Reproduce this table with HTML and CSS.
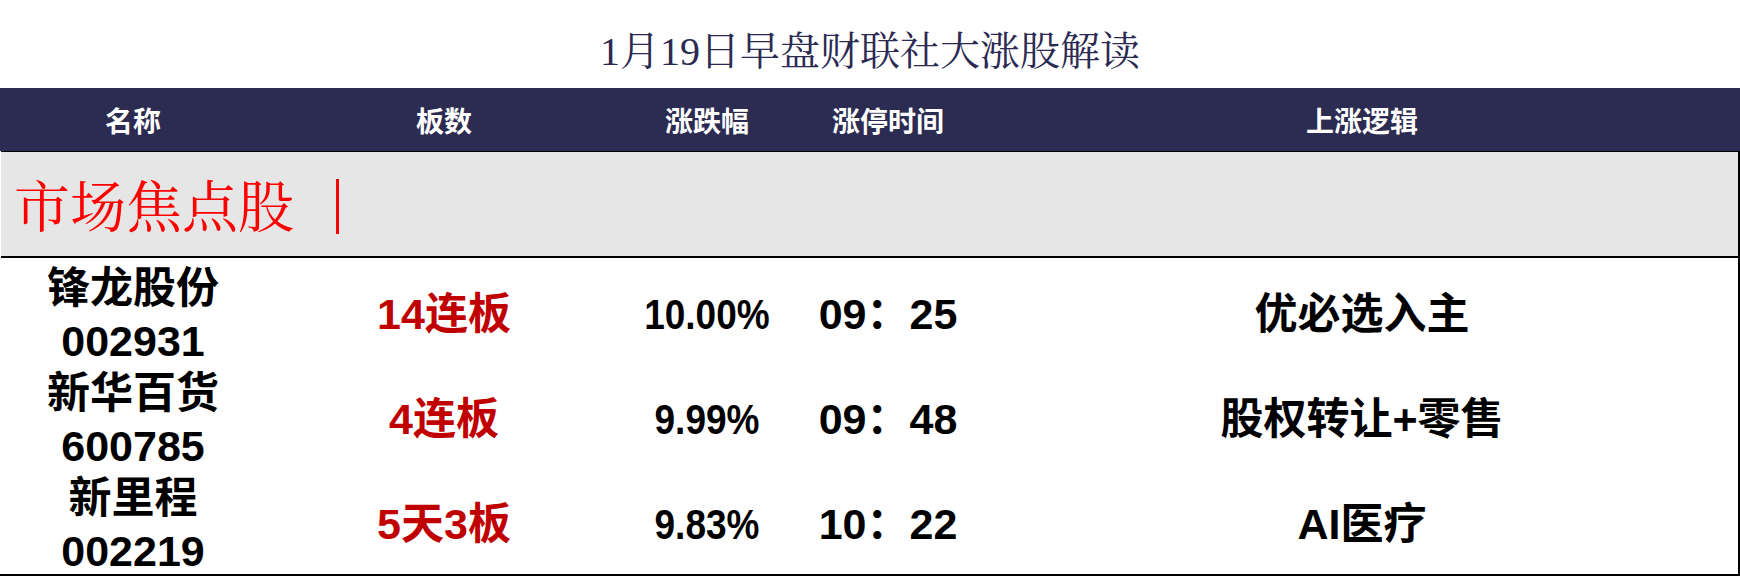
FILE: index.html
```html
<!DOCTYPE html>
<html lang="zh-CN">
<head>
<meta charset="utf-8">
<title>1月19日早盘财联社大涨股解读</title>
<link rel="stylesheet" href="styles.css">
</head>
<body>
<div class="page">
  <h1 class="title">1月19日早盘财联社大涨股解读</h1>
  <div class="head grid">
    <div class="cell">名称</div>
    <div class="cell">板数</div>
    <div class="cell">涨跌幅</div>
    <div class="cell">涨停时间</div>
    <div class="cell">上涨逻辑</div>
  </div>
  <div class="section">
    <span class="section-name">市场焦点股</span>
    <span class="section-bar"></span>
  </div>
  <div class="rows">
    <div class="row grid">
      <div class="cell name"><span>锋龙股份</span><span>002931</span></div>
      <div class="cell board">14连板</div>
      <div class="cell pct"><span class="narrow">10.00%</span></div>
      <div class="cell time">09：25</div>
      <div class="cell logic">优必选入主</div>
    </div>
    <div class="row grid">
      <div class="cell name"><span>新华百货</span><span>600785</span></div>
      <div class="cell board">4连板</div>
      <div class="cell pct"><span class="narrow">9.99%</span></div>
      <div class="cell time">09：48</div>
      <div class="cell logic">股权转让+零售</div>
    </div>
    <div class="row grid">
      <div class="cell name"><span>新里程</span><span>002219</span></div>
      <div class="cell board">5天3板</div>
      <div class="cell pct"><span class="narrow">9.83%</span></div>
      <div class="cell time">10：22</div>
      <div class="cell logic">AI医疗</div>
    </div>
  </div>
</div>
</body>
</html>
```

FILE: styles.css
```css
* {
  box-sizing: border-box;
}

html, body {
  margin: 0;
  padding: 0;
  background: #ffffff;
}

.page {
  width: 1740px;
  height: 576px;
  overflow: hidden;
  display: flex;
  flex-direction: column;
  font-family: "Liberation Sans", "Noto Sans CJK SC", sans-serif;
}

.title {
  flex: 0 0 88px;
  margin: 0;
  padding-top: 6px;
  display: flex;
  align-items: center;
  justify-content: center;
  font-family: "Liberation Serif", "Noto Serif CJK SC", "Noto Sans CJK SC", serif;
  font-weight: 400;
  font-size: 40px;
  color: #2b2a52;
}

.grid {
  display: grid;
  grid-template-columns: 266px 356px 170px 192px 756px;
}

.cell {
  display: flex;
  align-items: center;
  justify-content: center;
  white-space: nowrap;
  min-height: 0;
}

.head {
  flex: 0 0 63px;
  background: #2c2b51;
  color: #ffffff;
  font-size: 28px;
  font-weight: 700;
}

.section {
  flex: 0 0 107px;
  margin-left: 1px;
  background: #e6e6e6;
  border-top: 1px solid #000000;
  border-bottom: 2px solid #000000;
  border-right: 2px solid #000000;
  display: flex;
  align-items: center;
  padding-left: 13px;
  padding-top: 8px;
}

.section-name {
  font-family: "Liberation Serif", "Noto Serif CJK SC", "Noto Sans CJK SC", serif;
  font-size: 56px;
  color: #ff0000;
  line-height: 1;
}

.section-bar {
  width: 3px;
  height: 55px;
  margin-left: 42px;
  margin-top: -4px;
  background: #ff0000;
}

.rows {
  flex: 1 1 auto;
  min-height: 0;
  display: flex;
  flex-direction: column;
  border-right: 2px solid #000000;
  border-bottom: 2px solid #000000;
}

.row {
  flex: 1 1 0;
  min-height: 0;
  font-size: 43px;
  line-height: 1;
  font-weight: 700;
  color: #000000;
}

.row .cell {
  padding-top: 7px;
}

.row .name {
  flex-direction: column;
  line-height: 53px;
  padding-top: 8px;
}

.board {
  color: #c00000;
}

.narrow {
  display: inline-block;
  transform: scaleX(0.86);
}
```
